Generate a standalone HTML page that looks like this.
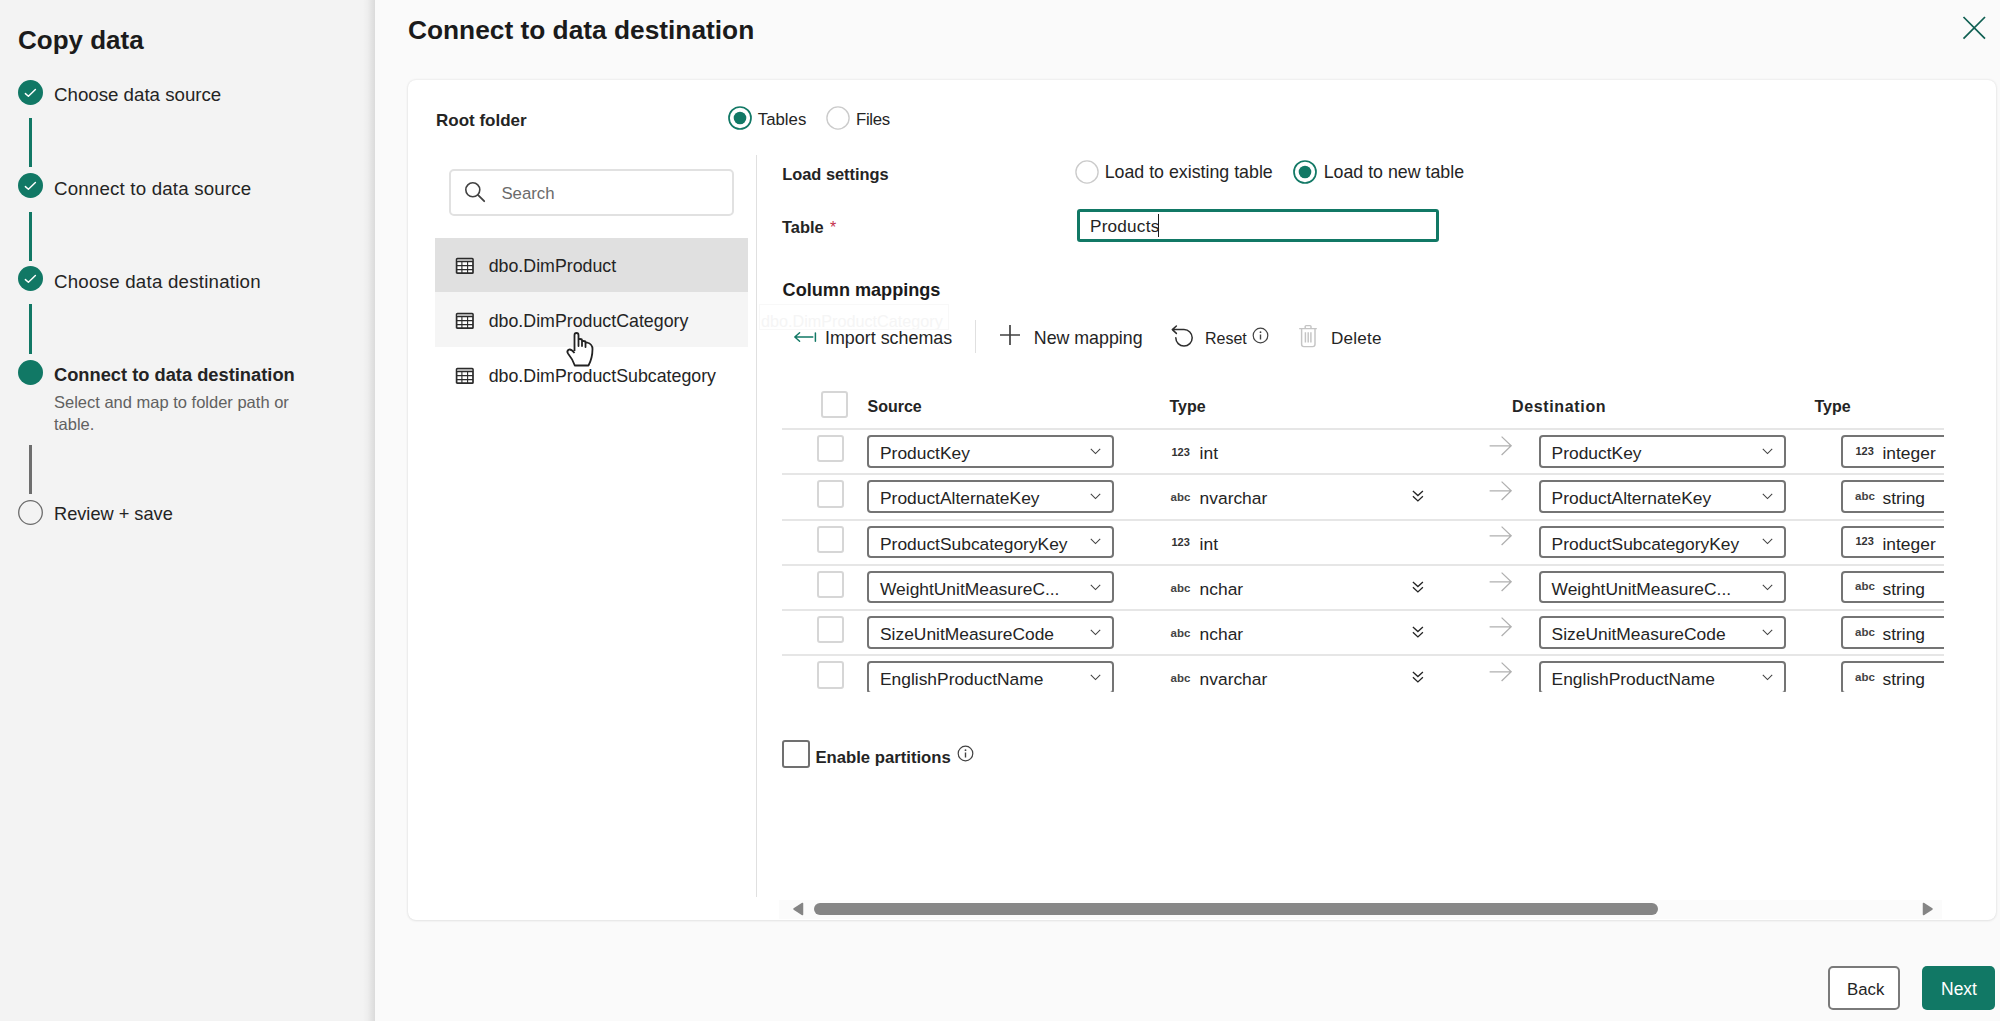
<!DOCTYPE html>
<html><head><meta charset="utf-8"><style>
html,body{margin:0;padding:0;}
body{width:2000px;height:1021px;position:relative;overflow:hidden;background:#fafafa;font-family:"Liberation Sans",sans-serif;}
.t{position:absolute;line-height:1;white-space:nowrap;}
svg{overflow:visible;}
</style></head><body>
<div style="position:absolute;left:0px;top:0px;width:375px;height:1021px;background:#f3f3f3;"></div>
<div style="position:absolute;left:363px;top:0px;width:12px;height:1021px;background:linear-gradient(to right,rgba(0,0,0,0),rgba(0,0,0,0.025) 40%,rgba(0,0,0,0.1));"></div>
<div class="t" style="left:18.0px;top:27px;font-size:26px;font-weight:700;color:#1b1b1b;">Copy data</div>
<svg style="position:absolute;left:18px;top:79.7px" width="25" height="25" viewBox="0 0 25 25"><circle cx="12.5" cy="12.5" r="12.5" fill="#117865"/><path d="M7.4 13.6 L10.4 16.3 L17.4 9.6" stroke="#fff" stroke-width="1.45" fill="none" stroke-linecap="round" stroke-linejoin="round"/></svg>
<div class="t" style="left:54.0px;top:86px;font-size:18.7px;color:#242424;">Choose data source</div>
<svg style="position:absolute;left:18px;top:173.0px" width="25" height="25" viewBox="0 0 25 25"><circle cx="12.5" cy="12.5" r="12.5" fill="#117865"/><path d="M7.4 13.6 L10.4 16.3 L17.4 9.6" stroke="#fff" stroke-width="1.45" fill="none" stroke-linecap="round" stroke-linejoin="round"/></svg>
<div class="t" style="left:54.0px;top:180px;font-size:18.7px;color:#242424;letter-spacing:0.19px;">Connect to data source</div>
<svg style="position:absolute;left:18px;top:266.3px" width="25" height="25" viewBox="0 0 25 25"><circle cx="12.5" cy="12.5" r="12.5" fill="#117865"/><path d="M7.4 13.6 L10.4 16.3 L17.4 9.6" stroke="#fff" stroke-width="1.45" fill="none" stroke-linecap="round" stroke-linejoin="round"/></svg>
<div class="t" style="left:54.0px;top:273px;font-size:18.7px;color:#242424;letter-spacing:0.23px;">Choose data destination</div>
<svg style="position:absolute;left:18px;top:359.5px" width="25" height="25" viewBox="0 0 25 25"><circle cx="12.5" cy="12.5" r="12.5" fill="#117865"/></svg>
<div class="t" style="left:54.0px;top:366px;font-size:18.3px;font-weight:700;color:#242424;">Connect to data destination</div>
<svg style="position:absolute;left:18px;top:499.5px" width="25" height="25" viewBox="0 0 25 25"><circle cx="12.5" cy="12.5" r="11.8" fill="none" stroke="#6b6b6b" stroke-width="1.3"/></svg>
<div class="t" style="left:54.0px;top:505px;font-size:18.2px;color:#242424;">Review + save</div>
<div style="position:absolute;left:29px;top:118px;width:3px;height:49px;background:#117865;"></div>
<div style="position:absolute;left:29px;top:212px;width:3px;height:49px;background:#117865;"></div>
<div style="position:absolute;left:29px;top:304px;width:3px;height:50px;background:#117865;"></div>
<div style="position:absolute;left:29px;top:445px;width:3px;height:49px;background:#6e6e6e;"></div>
<div class="t" style="left:54.0px;top:394px;font-size:16.5px;color:#616161;">Select and map to folder path or</div>
<div class="t" style="left:54.0px;top:416px;font-size:16.5px;color:#616161;">table.</div>
<div class="t" style="left:408.0px;top:17px;font-size:26.3px;font-weight:700;color:#1b1b1b;">Connect to data destination</div>
<svg style="position:absolute;left:1962px;top:16px" width="24" height="24" viewBox="0 0 24 24"><path d="M1.5 1 L23 22.7 M23 1 L1.5 22.7" stroke="#0f5f52" stroke-width="1.75"/></svg>
<div style="position:absolute;left:407.5px;top:79.5px;width:1588.3px;height:840.3px;background:#fff;border-radius:8px;box-shadow:0 0 2.5px rgba(0,0,0,0.12),0 1px 3px rgba(0,0,0,0.05);"></div>
<div class="t" style="left:436.0px;top:112px;font-size:17px;font-weight:700;color:#242424;">Root folder</div>
<svg style="position:absolute;left:728.2px;top:106.2px" width="24" height="24" viewBox="0 0 24 24"><circle cx="12" cy="12" r="11" fill="none" stroke="#117865" stroke-width="1.7"/><circle cx="12" cy="12" r="6.3" fill="#117865"/></svg>
<div class="t" style="left:757.8px;top:112px;font-size:16.8px;color:#242424;">Tables</div>
<svg style="position:absolute;left:825.6px;top:106.2px" width="24" height="24" viewBox="0 0 24 24"><circle cx="12" cy="12" r="11.1" fill="none" stroke="#cbcbcb" stroke-width="1.35"/></svg>
<div class="t" style="left:856.0px;top:112px;font-size:16.8px;color:#242424;letter-spacing:-0.35px;">Files</div>
<div style="position:absolute;left:449px;top:169px;width:285px;height:47px;box-sizing:border-box;border:2px solid #e1e1e1;border-radius:5px;background:#fff;"></div>
<svg style="position:absolute;left:464px;top:181px" width="22" height="22" viewBox="0 0 22 22"><circle cx="8.8" cy="8.8" r="7" fill="none" stroke="#424242" stroke-width="1.6"/><path d="M13.9 13.9 L20.2 20.2" stroke="#424242" stroke-width="1.8" stroke-linecap="round"/></svg>
<div class="t" style="left:501.4px;top:186px;font-size:16.8px;color:#6b6b6b;">Search</div>
<div style="position:absolute;left:435px;top:238px;width:313px;height:54px;background:#e0e0e0;"></div>
<div style="position:absolute;left:435px;top:292px;width:313px;height:55px;background:#f5f5f5;"></div>
<svg style="position:absolute;left:455px;top:257px" width="20" height="18" viewBox="0 0 20 18"><rect x="1.6" y="1.6" width="16.4" height="14.6" rx="0.8" fill="#fff" stroke="#2b2b2b" stroke-width="1.7"/><rect x="2.4" y="2.4" width="14.8" height="2" fill="#b8b8b8"/><path d="M1.6 4.6 H18 M1.6 8.6 H18 M1.6 12.6 H18 M6.9 4.6 V16 M12.6 4.6 V16" stroke="#2b2b2b" stroke-width="1.1"/></svg>
<div class="t" style="left:488.7px;top:258px;font-size:17.8px;color:#242424;">dbo.DimProduct</div>
<svg style="position:absolute;left:455px;top:312px" width="20" height="18" viewBox="0 0 20 18"><rect x="1.6" y="1.6" width="16.4" height="14.6" rx="0.8" fill="#fff" stroke="#2b2b2b" stroke-width="1.7"/><rect x="2.4" y="2.4" width="14.8" height="2" fill="#b8b8b8"/><path d="M1.6 4.6 H18 M1.6 8.6 H18 M1.6 12.6 H18 M6.9 4.6 V16 M12.6 4.6 V16" stroke="#2b2b2b" stroke-width="1.1"/></svg>
<div class="t" style="left:488.7px;top:313px;font-size:17.8px;color:#242424;">dbo.DimProductCategory</div>
<svg style="position:absolute;left:455px;top:367px" width="20" height="18" viewBox="0 0 20 18"><rect x="1.6" y="1.6" width="16.4" height="14.6" rx="0.8" fill="#fff" stroke="#2b2b2b" stroke-width="1.7"/><rect x="2.4" y="2.4" width="14.8" height="2" fill="#b8b8b8"/><path d="M1.6 4.6 H18 M1.6 8.6 H18 M1.6 12.6 H18 M6.9 4.6 V16 M12.6 4.6 V16" stroke="#2b2b2b" stroke-width="1.1"/></svg>
<div class="t" style="left:488.7px;top:368px;font-size:17.8px;color:#242424;">dbo.DimProductSubcategory</div>
<div style="position:absolute;left:756px;top:155px;width:1px;height:742px;background:#e0e0e0;"></div>
<div class="t" style="left:782.2px;top:166px;font-size:16.4px;font-weight:700;color:#242424;">Load settings</div>
<svg style="position:absolute;left:1075.3px;top:159.9px" width="24" height="24" viewBox="0 0 24 24"><circle cx="12" cy="12" r="11.1" fill="none" stroke="#cbcbcb" stroke-width="1.35"/></svg>
<div class="t" style="left:1104.7px;top:164px;font-size:17.8px;color:#242424;">Load to existing table</div>
<svg style="position:absolute;left:1293.2px;top:159.9px" width="24" height="24" viewBox="0 0 24 24"><circle cx="12" cy="12" r="11" fill="none" stroke="#117865" stroke-width="1.7"/><circle cx="12" cy="12" r="6.3" fill="#117865"/></svg>
<div class="t" style="left:1323.7px;top:164px;font-size:17.8px;color:#242424;">Load to new table</div>
<div class="t" style="left:782.0px;top:219px;font-size:16.4px;font-weight:700;color:#242424;">Table</div>
<div class="t" style="left:830.0px;top:220px;font-size:16px;color:#c4314b;">*</div>
<div style="position:absolute;left:1077px;top:209px;width:362px;height:33px;box-sizing:border-box;border:3px solid #117865;border-radius:3px;background:#fff;"></div>
<div class="t" style="left:1090.0px;top:218px;font-size:17.2px;color:#242424;letter-spacing:0.2px;">Products</div>
<div style="position:absolute;left:1158px;top:214px;width:1.2999999999999545px;height:22.5px;background:#1b1b1b;"></div>
<div class="t" style="left:782.6px;top:281px;font-size:18.1px;font-weight:700;color:#1b1b1b;">Column mappings</div>
<div style="position:absolute;left:759px;top:304px;width:190px;height:26px;overflow:hidden;box-sizing:border-box;border:1px solid #f8f8f8;">
<div class="t" style="left:1px;top:8px;font-size:16.2px;color:#f5f5f5;">dbo.DimProductCategory</div>
</div>
<svg style="position:absolute;left:793px;top:330px" width="26" height="14" viewBox="0 0 26 14"><path d="M1.8 7 H19.8 M6.6 2.7 L1.8 7 L6.6 11.3" stroke="#117865" stroke-width="1.45" fill="none" stroke-linecap="round" stroke-linejoin="round"/><path d="M22.4 2.9 V11.3" stroke="#117865" stroke-width="1.5" stroke-linecap="round"/></svg>
<div class="t" style="left:825.0px;top:330px;font-size:17.9px;color:#242424;">Import schemas</div>
<div style="position:absolute;left:975px;top:320px;width:1px;height:33px;background:#e0e0e0;"></div>
<svg style="position:absolute;left:999px;top:324px" width="22" height="22" viewBox="0 0 22 22"><path d="M11 1 V21 M1 11 H21" stroke="#424242" stroke-width="1.7"/></svg>
<div class="t" style="left:1033.8px;top:330px;font-size:17.8px;color:#242424;">New mapping</div>
<svg style="position:absolute;left:1171px;top:325px" width="23" height="23" viewBox="0 0 23 23"><path d="M1.3 4.6 H13 A8.2 8.2 0 1 1 4.8 12.8 M5.4 1 L1.3 4.6 L5.4 8.4" stroke="#2e2e2e" stroke-width="1.5" fill="none" stroke-linecap="round" stroke-linejoin="round"/></svg>
<div class="t" style="left:1205.0px;top:331px;font-size:16px;color:#242424;">Reset</div>
<svg style="position:absolute;left:1252px;top:327px" width="17" height="17" viewBox="0 0 17 17"><circle cx="8.5" cy="8.5" r="7.3" fill="none" stroke="#424242" stroke-width="1.2"/><path d="M8.5 7.5 V12.5" stroke="#424242" stroke-width="1.4"/><circle cx="8.5" cy="5.2" r="0.9" fill="#424242"/></svg>
<svg style="position:absolute;left:1298px;top:324px" width="20" height="24" viewBox="0 0 20 24"><path d="M1.2 4.6 H18.8 M7.2 4.6 V2.6 Q7.2 1.6 8.2 1.6 H12 Q13 1.6 13 2.6 V4.6 M3.6 4.6 V20.3 Q3.6 22.6 5.9 22.6 H14.7 Q17 22.6 17 20.3 V4.6 M7.4 8.2 V18.4 M10.2 8.2 V18.4 M12.9 8.2 V18.4" stroke="#c4c4c4" stroke-width="1.45" fill="none"/></svg>
<div class="t" style="left:1330.9px;top:330px;font-size:17.1px;color:#242424;letter-spacing:0.25px;">Delete</div>
<div style="position:absolute;left:820.8px;top:391px;width:27.200000000000045px;height:27.19999999999999px;box-sizing:border-box;border:2px solid #d6d6d6;border-radius:3px;background:#fff;"></div>
<div class="t" style="left:867.5px;top:399px;font-size:16px;font-weight:700;color:#242424;">Source</div>
<div class="t" style="left:1169.4px;top:399px;font-size:16px;font-weight:700;color:#242424;">Type</div>
<div class="t" style="left:1512.0px;top:399px;font-size:16px;font-weight:700;color:#242424;letter-spacing:0.65px;">Destination</div>
<div class="t" style="left:1814.4px;top:399px;font-size:16px;font-weight:700;color:#242424;">Type</div>
<div style="position:absolute;left:0;top:0;width:1944px;height:692px;overflow:hidden;">
<div style="position:absolute;left:782px;top:428px;width:1162px;height:2px;background:#e6e6e6;"></div>
<div style="position:absolute;left:816.5px;top:435.0px;width:27.299999999999955px;height:27.30000000000001px;box-sizing:border-box;border:2px solid #d6d6d6;border-radius:3px;background:#fff;"></div>
<div style="position:absolute;left:867px;top:435.2px;width:247px;height:32.5px;box-sizing:border-box;border:2px solid #747474;border-radius:4px;background:#fff;"></div>
<div class="t" style="left:880.0px;top:445px;font-size:17.4px;color:#242424;">ProductKey</div>
<svg style="position:absolute;left:1090px;top:448px" width="11" height="7" viewBox="0 0 11 7"><path d="M0.8 0.8 L5.5 5.5 L10.2 0.8" stroke="#424242" stroke-width="1.05" fill="none"/></svg>
<div class="t" style="left:1171.4px;top:447px;font-size:11px;font-weight:700;color:#333;">123</div>
<div class="t" style="left:1199.6px;top:445px;font-size:17.4px;color:#242424;">int</div>
<svg style="position:absolute;left:1489px;top:436px" width="24" height="20" viewBox="0 0 24 20"><path d="M0.6 9.8 H22 M12.6 0.6 L22.2 9.8 L12.6 19" stroke="#b0b0b0" stroke-width="1.25" fill="none"/></svg>
<div style="position:absolute;left:1539px;top:435.2px;width:247px;height:32.5px;box-sizing:border-box;border:2px solid #747474;border-radius:4px;background:#fff;"></div>
<div class="t" style="left:1551.6px;top:445px;font-size:17.4px;color:#242424;">ProductKey</div>
<svg style="position:absolute;left:1762px;top:448px" width="11" height="7" viewBox="0 0 11 7"><path d="M0.8 0.8 L5.5 5.5 L10.2 0.8" stroke="#424242" stroke-width="1.05" fill="none"/></svg>
<div style="position:absolute;left:1841px;top:435.2px;width:119px;height:32.5px;box-sizing:border-box;border:2px solid #747474;border-radius:4px;background:#fff;"></div>
<div class="t" style="left:1855.5px;top:446px;font-size:11px;font-weight:700;color:#333;">123</div>
<div class="t" style="left:1882.5px;top:445px;font-size:17.4px;color:#242424;">integer</div>
<div style="position:absolute;left:782px;top:473px;width:1162px;height:2px;background:#e6e6e6;"></div>
<div style="position:absolute;left:816.5px;top:480.25px;width:27.299999999999955px;height:27.30000000000001px;box-sizing:border-box;border:2px solid #d6d6d6;border-radius:3px;background:#fff;"></div>
<div style="position:absolute;left:867px;top:480.45px;width:247px;height:32.50000000000006px;box-sizing:border-box;border:2px solid #747474;border-radius:4px;background:#fff;"></div>
<div class="t" style="left:880.0px;top:490px;font-size:17.4px;color:#242424;">ProductAlternateKey</div>
<svg style="position:absolute;left:1090px;top:493px" width="11" height="7" viewBox="0 0 11 7"><path d="M0.8 0.8 L5.5 5.5 L10.2 0.8" stroke="#424242" stroke-width="1.05" fill="none"/></svg>
<div class="t" style="left:1170.6px;top:492px;font-size:11.5px;font-weight:700;color:#444;">abc</div>
<div class="t" style="left:1199.6px;top:490px;font-size:17.4px;color:#242424;">nvarchar</div>
<svg style="position:absolute;left:1411px;top:490px" width="14" height="13" viewBox="0 0 14 13"><path d="M1.9 1 L6.9 5.6 L11.9 1 M1.9 6.2 L6.9 10.9 L11.9 6.2" stroke="#242424" stroke-width="1.3" fill="none"/></svg>
<svg style="position:absolute;left:1489px;top:481px" width="24" height="20" viewBox="0 0 24 20"><path d="M0.6 9.8 H22 M12.6 0.6 L22.2 9.8 L12.6 19" stroke="#b0b0b0" stroke-width="1.25" fill="none"/></svg>
<div style="position:absolute;left:1539px;top:480.45px;width:247px;height:32.50000000000006px;box-sizing:border-box;border:2px solid #747474;border-radius:4px;background:#fff;"></div>
<div class="t" style="left:1551.6px;top:490px;font-size:17.4px;color:#242424;">ProductAlternateKey</div>
<svg style="position:absolute;left:1762px;top:493px" width="11" height="7" viewBox="0 0 11 7"><path d="M0.8 0.8 L5.5 5.5 L10.2 0.8" stroke="#424242" stroke-width="1.05" fill="none"/></svg>
<div style="position:absolute;left:1841px;top:480.45px;width:119px;height:32.50000000000006px;box-sizing:border-box;border:2px solid #747474;border-radius:4px;background:#fff;"></div>
<div class="t" style="left:1855.0px;top:491px;font-size:11.5px;font-weight:700;color:#444;">abc</div>
<div class="t" style="left:1882.5px;top:490px;font-size:17.4px;color:#242424;">string</div>
<div style="position:absolute;left:782px;top:519px;width:1162px;height:2px;background:#e6e6e6;"></div>
<div style="position:absolute;left:816.5px;top:525.5px;width:27.299999999999955px;height:27.299999999999955px;box-sizing:border-box;border:2px solid #d6d6d6;border-radius:3px;background:#fff;"></div>
<div style="position:absolute;left:867px;top:525.7px;width:247px;height:32.5px;box-sizing:border-box;border:2px solid #747474;border-radius:4px;background:#fff;"></div>
<div class="t" style="left:880.0px;top:536px;font-size:17.4px;color:#242424;">ProductSubcategoryKey</div>
<svg style="position:absolute;left:1090px;top:538px" width="11" height="7" viewBox="0 0 11 7"><path d="M0.8 0.8 L5.5 5.5 L10.2 0.8" stroke="#424242" stroke-width="1.05" fill="none"/></svg>
<div class="t" style="left:1171.4px;top:537px;font-size:11px;font-weight:700;color:#333;">123</div>
<div class="t" style="left:1199.6px;top:536px;font-size:17.4px;color:#242424;">int</div>
<svg style="position:absolute;left:1489px;top:526px" width="24" height="20" viewBox="0 0 24 20"><path d="M0.6 9.8 H22 M12.6 0.6 L22.2 9.8 L12.6 19" stroke="#b0b0b0" stroke-width="1.25" fill="none"/></svg>
<div style="position:absolute;left:1539px;top:525.7px;width:247px;height:32.5px;box-sizing:border-box;border:2px solid #747474;border-radius:4px;background:#fff;"></div>
<div class="t" style="left:1551.6px;top:536px;font-size:17.4px;color:#242424;">ProductSubcategoryKey</div>
<svg style="position:absolute;left:1762px;top:538px" width="11" height="7" viewBox="0 0 11 7"><path d="M0.8 0.8 L5.5 5.5 L10.2 0.8" stroke="#424242" stroke-width="1.05" fill="none"/></svg>
<div style="position:absolute;left:1841px;top:525.7px;width:119px;height:32.5px;box-sizing:border-box;border:2px solid #747474;border-radius:4px;background:#fff;"></div>
<div class="t" style="left:1855.5px;top:536px;font-size:11px;font-weight:700;color:#333;">123</div>
<div class="t" style="left:1882.5px;top:536px;font-size:17.4px;color:#242424;">integer</div>
<div style="position:absolute;left:782px;top:564px;width:1162px;height:2px;background:#e6e6e6;"></div>
<div style="position:absolute;left:816.5px;top:570.75px;width:27.299999999999955px;height:27.299999999999955px;box-sizing:border-box;border:2px solid #d6d6d6;border-radius:3px;background:#fff;"></div>
<div style="position:absolute;left:867px;top:570.95px;width:247px;height:32.5px;box-sizing:border-box;border:2px solid #747474;border-radius:4px;background:#fff;"></div>
<div class="t" style="left:880.0px;top:581px;font-size:17.4px;color:#242424;">WeightUnitMeasureC...</div>
<svg style="position:absolute;left:1090px;top:584px" width="11" height="7" viewBox="0 0 11 7"><path d="M0.8 0.8 L5.5 5.5 L10.2 0.8" stroke="#424242" stroke-width="1.05" fill="none"/></svg>
<div class="t" style="left:1170.6px;top:583px;font-size:11.5px;font-weight:700;color:#444;">abc</div>
<div class="t" style="left:1199.6px;top:581px;font-size:17.4px;color:#242424;">nchar</div>
<svg style="position:absolute;left:1411px;top:581px" width="14" height="13" viewBox="0 0 14 13"><path d="M1.9 1 L6.9 5.6 L11.9 1 M1.9 6.2 L6.9 10.9 L11.9 6.2" stroke="#242424" stroke-width="1.3" fill="none"/></svg>
<svg style="position:absolute;left:1489px;top:572px" width="24" height="20" viewBox="0 0 24 20"><path d="M0.6 9.8 H22 M12.6 0.6 L22.2 9.8 L12.6 19" stroke="#b0b0b0" stroke-width="1.25" fill="none"/></svg>
<div style="position:absolute;left:1539px;top:570.95px;width:247px;height:32.5px;box-sizing:border-box;border:2px solid #747474;border-radius:4px;background:#fff;"></div>
<div class="t" style="left:1551.6px;top:581px;font-size:17.4px;color:#242424;">WeightUnitMeasureC...</div>
<svg style="position:absolute;left:1762px;top:584px" width="11" height="7" viewBox="0 0 11 7"><path d="M0.8 0.8 L5.5 5.5 L10.2 0.8" stroke="#424242" stroke-width="1.05" fill="none"/></svg>
<div style="position:absolute;left:1841px;top:570.95px;width:119px;height:32.5px;box-sizing:border-box;border:2px solid #747474;border-radius:4px;background:#fff;"></div>
<div class="t" style="left:1855.0px;top:581px;font-size:11.5px;font-weight:700;color:#444;">abc</div>
<div class="t" style="left:1882.5px;top:581px;font-size:17.4px;color:#242424;">string</div>
<div style="position:absolute;left:782px;top:609px;width:1162px;height:2px;background:#e6e6e6;"></div>
<div style="position:absolute;left:816.5px;top:616.0px;width:27.299999999999955px;height:27.299999999999955px;box-sizing:border-box;border:2px solid #d6d6d6;border-radius:3px;background:#fff;"></div>
<div style="position:absolute;left:867px;top:616.2px;width:247px;height:32.5px;box-sizing:border-box;border:2px solid #747474;border-radius:4px;background:#fff;"></div>
<div class="t" style="left:880.0px;top:626px;font-size:17.4px;color:#242424;">SizeUnitMeasureCode</div>
<svg style="position:absolute;left:1090px;top:629px" width="11" height="7" viewBox="0 0 11 7"><path d="M0.8 0.8 L5.5 5.5 L10.2 0.8" stroke="#424242" stroke-width="1.05" fill="none"/></svg>
<div class="t" style="left:1170.6px;top:628px;font-size:11.5px;font-weight:700;color:#444;">abc</div>
<div class="t" style="left:1199.6px;top:626px;font-size:17.4px;color:#242424;">nchar</div>
<svg style="position:absolute;left:1411px;top:626px" width="14" height="13" viewBox="0 0 14 13"><path d="M1.9 1 L6.9 5.6 L11.9 1 M1.9 6.2 L6.9 10.9 L11.9 6.2" stroke="#242424" stroke-width="1.3" fill="none"/></svg>
<svg style="position:absolute;left:1489px;top:617px" width="24" height="20" viewBox="0 0 24 20"><path d="M0.6 9.8 H22 M12.6 0.6 L22.2 9.8 L12.6 19" stroke="#b0b0b0" stroke-width="1.25" fill="none"/></svg>
<div style="position:absolute;left:1539px;top:616.2px;width:247px;height:32.5px;box-sizing:border-box;border:2px solid #747474;border-radius:4px;background:#fff;"></div>
<div class="t" style="left:1551.6px;top:626px;font-size:17.4px;color:#242424;">SizeUnitMeasureCode</div>
<svg style="position:absolute;left:1762px;top:629px" width="11" height="7" viewBox="0 0 11 7"><path d="M0.8 0.8 L5.5 5.5 L10.2 0.8" stroke="#424242" stroke-width="1.05" fill="none"/></svg>
<div style="position:absolute;left:1841px;top:616.2px;width:119px;height:32.5px;box-sizing:border-box;border:2px solid #747474;border-radius:4px;background:#fff;"></div>
<div class="t" style="left:1855.0px;top:627px;font-size:11.5px;font-weight:700;color:#444;">abc</div>
<div class="t" style="left:1882.5px;top:626px;font-size:17.4px;color:#242424;">string</div>
<div style="position:absolute;left:782px;top:654px;width:1162px;height:2px;background:#e6e6e6;"></div>
<div style="position:absolute;left:816.5px;top:661.25px;width:27.299999999999955px;height:27.299999999999955px;box-sizing:border-box;border:2px solid #d6d6d6;border-radius:3px;background:#fff;"></div>
<div style="position:absolute;left:867px;top:661.45px;width:247px;height:32.5px;box-sizing:border-box;border:2px solid #747474;border-radius:4px;background:#fff;"></div>
<div class="t" style="left:880.0px;top:671px;font-size:17.4px;color:#242424;">EnglishProductName</div>
<svg style="position:absolute;left:1090px;top:674px" width="11" height="7" viewBox="0 0 11 7"><path d="M0.8 0.8 L5.5 5.5 L10.2 0.8" stroke="#424242" stroke-width="1.05" fill="none"/></svg>
<div class="t" style="left:1170.6px;top:673px;font-size:11.5px;font-weight:700;color:#444;">abc</div>
<div class="t" style="left:1199.6px;top:671px;font-size:17.4px;color:#242424;">nvarchar</div>
<svg style="position:absolute;left:1411px;top:671px" width="14" height="13" viewBox="0 0 14 13"><path d="M1.9 1 L6.9 5.6 L11.9 1 M1.9 6.2 L6.9 10.9 L11.9 6.2" stroke="#242424" stroke-width="1.3" fill="none"/></svg>
<svg style="position:absolute;left:1489px;top:662px" width="24" height="20" viewBox="0 0 24 20"><path d="M0.6 9.8 H22 M12.6 0.6 L22.2 9.8 L12.6 19" stroke="#b0b0b0" stroke-width="1.25" fill="none"/></svg>
<div style="position:absolute;left:1539px;top:661.45px;width:247px;height:32.5px;box-sizing:border-box;border:2px solid #747474;border-radius:4px;background:#fff;"></div>
<div class="t" style="left:1551.6px;top:671px;font-size:17.4px;color:#242424;">EnglishProductName</div>
<svg style="position:absolute;left:1762px;top:674px" width="11" height="7" viewBox="0 0 11 7"><path d="M0.8 0.8 L5.5 5.5 L10.2 0.8" stroke="#424242" stroke-width="1.05" fill="none"/></svg>
<div style="position:absolute;left:1841px;top:661.45px;width:119px;height:32.5px;box-sizing:border-box;border:2px solid #747474;border-radius:4px;background:#fff;"></div>
<div class="t" style="left:1855.0px;top:672px;font-size:11.5px;font-weight:700;color:#444;">abc</div>
<div class="t" style="left:1882.5px;top:671px;font-size:17.4px;color:#242424;">string</div>
</div>
<div style="position:absolute;left:782px;top:740px;width:28px;height:28px;box-sizing:border-box;border:2px solid #707070;border-radius:3px;background:#fff;"></div>
<div class="t" style="left:815.4px;top:750px;font-size:16.7px;font-weight:700;color:#242424;">Enable partitions</div>
<svg style="position:absolute;left:957px;top:745px" width="17" height="17" viewBox="0 0 17 17"><circle cx="8.5" cy="8.5" r="7.3" fill="none" stroke="#424242" stroke-width="1.2"/><path d="M8.5 7.5 V12.5" stroke="#424242" stroke-width="1.4"/><circle cx="8.5" cy="5.2" r="0.9" fill="#424242"/></svg>
<div style="position:absolute;left:779px;top:900px;width:1163px;height:19px;background:#fbfbfb;"></div>
<svg style="position:absolute;left:792px;top:902px" width="12" height="14" viewBox="0 0 12 14"><path d="M10.5 1.5 V12.5 L2 7 Z" fill="#858585" stroke="#858585" stroke-width="1.5" stroke-linejoin="round"/></svg>
<div style="position:absolute;left:814px;top:903px;width:844px;height:12px;background:#858585;border-radius:6px;"></div>
<svg style="position:absolute;left:1922px;top:902px" width="12" height="14" viewBox="0 0 12 14"><path d="M1.5 1.5 V12.5 L10 7 Z" fill="#858585" stroke="#858585" stroke-width="1.5" stroke-linejoin="round"/></svg>
<div style="position:absolute;left:1828px;top:966px;width:72px;height:44px;box-sizing:border-box;border:2px solid #7a7a7a;border-radius:5px;background:#fff;"></div>
<div class="t" style="left:1847.0px;top:982px;font-size:16.8px;color:#242424;">Back</div>
<div style="position:absolute;left:1922px;top:966px;width:73px;height:44px;border-radius:5px;background:#117865;"></div>
<div class="t" style="left:1941.0px;top:981px;font-size:17.5px;color:#fff;">Next</div>
<svg style="position:absolute;left:566px;top:332px" width="28" height="35" viewBox="0 0 28 35"><path d="M8.5 19 V3.2 Q8.5 1 10.5 1 Q12.5 1 12.5 3.2 V14 V8 Q12.5 7 14 7 Q16 7 16 8.5 V14 V10 Q16 9 17.5 9 Q19.5 9 19.5 10.5 V15 V11.5 Q19.5 10.5 21 10.5 Q26.5 12 26.5 17 Q26.5 26 22.5 33.5 H8.8 Q6.5 27 2 21.5 Q0.5 19.5 2.5 17.8 Q5 16.5 8.5 21" fill="#fff" stroke="#222" stroke-width="1.8" stroke-linejoin="round"/></svg>
</body></html>
